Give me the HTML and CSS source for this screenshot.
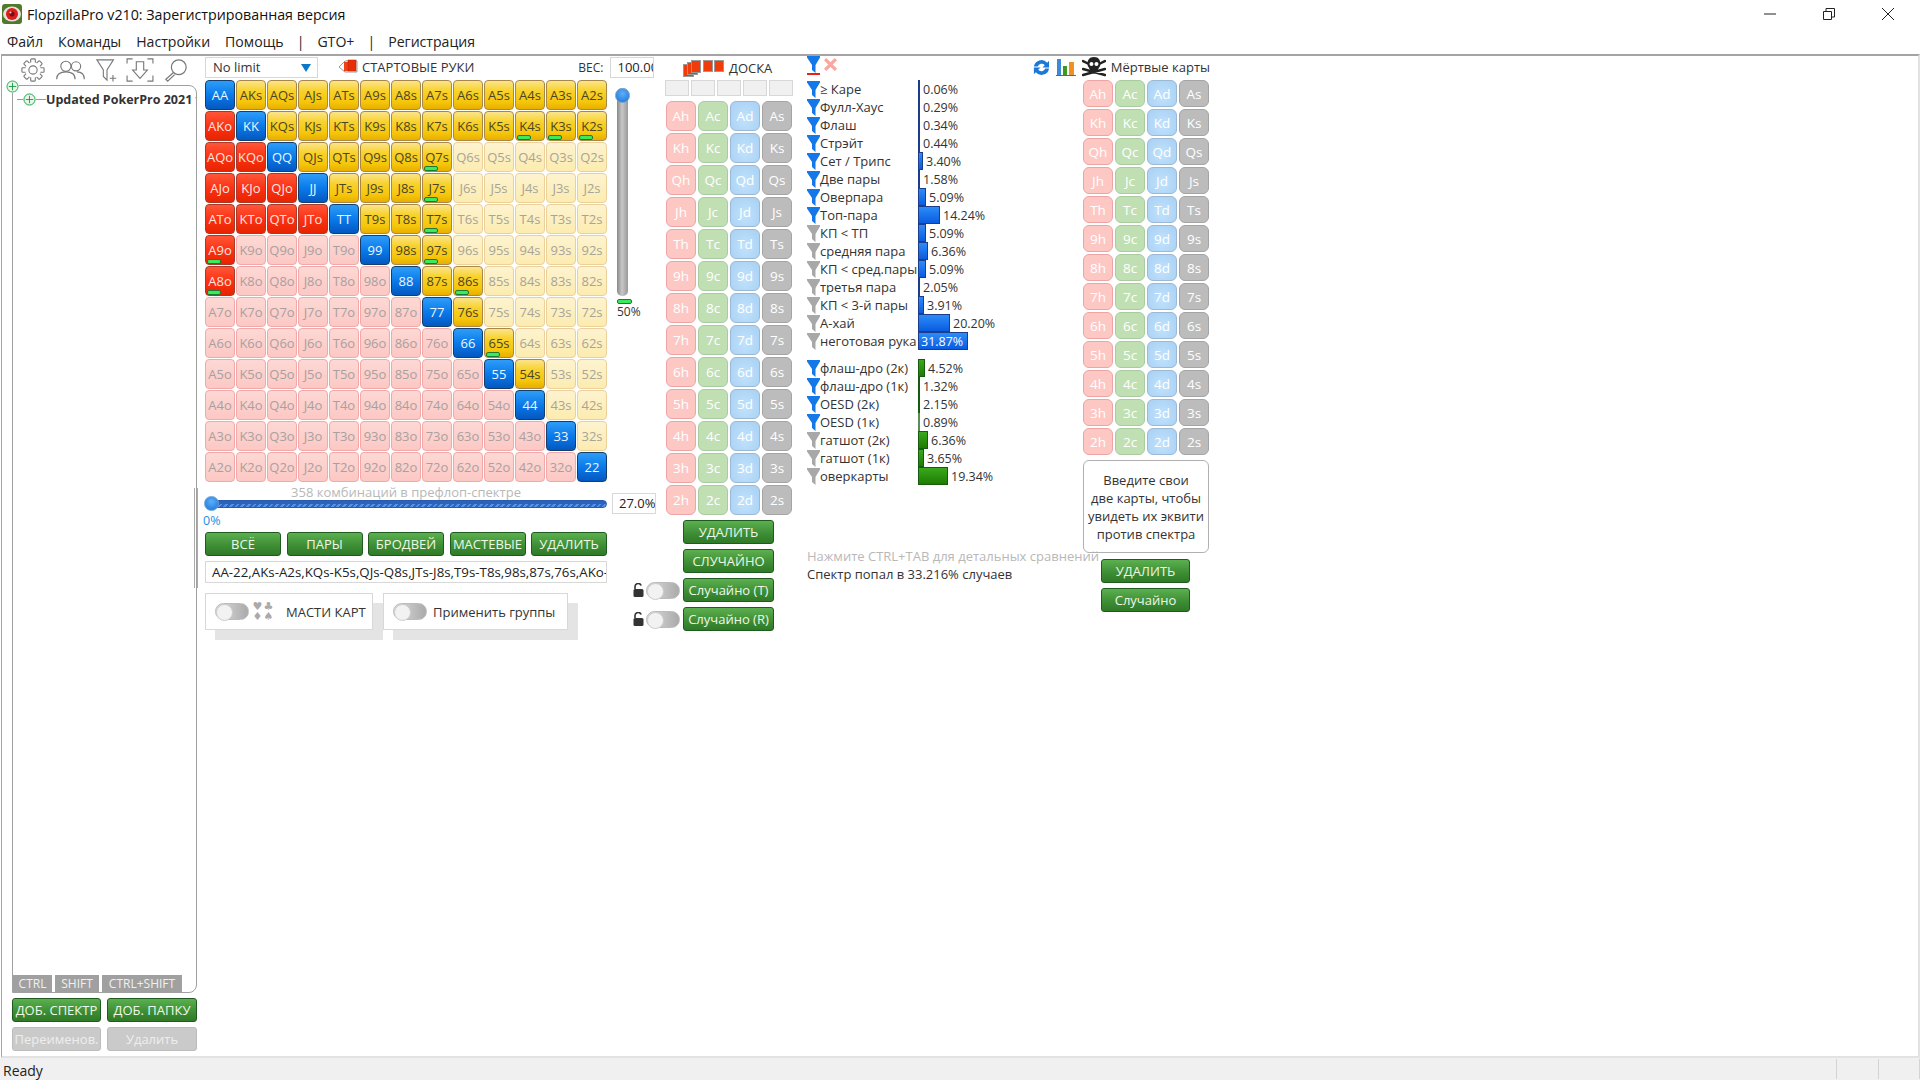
FILE: index.html
```html
<!DOCTYPE html>
<html lang="ru">
<head>
<meta charset="utf-8">
<title>FlopzillaPro v210</title>
<link rel="stylesheet" href="styles.css">
</head>
<body>
<svg class="defs" width="0" height="0">
  <symbol id="funnel" viewBox="0 0 13 17"><path d="M0 0H13V1.500L8.500 9V17L5 14V9L0 1.500Z"/></symbol>
  <symbol id="lock" viewBox="0 0 12 14"><path d="M2 6V3.500A3.200 3.200 0 0 1 8.200 2.600" fill="none" stroke="#333" stroke-width="1.600"/><rect x="0.500" y="6" width="10" height="8" rx="1.500" fill="#333"/></symbol>
</svg>

<header class="titlebar">
  <svg class="logo" viewBox="0 0 20 20"><rect width="20" height="20" rx="3" fill="#4f7a2c"/><ellipse cx="10" cy="10" rx="9" ry="7.500" fill="#e8e0d8"/><circle cx="10" cy="10" r="6" fill="#d81e1e"/><circle cx="10" cy="10" r="2.500" fill="#7a0c0c"/><circle cx="8.500" cy="8.500" r="1" fill="#ffd0d0"/></svg>
  <span class="title">FlopzillaPro v210: Зарегистрированная версия</span>
  <div class="winbtns">
    <svg class="winbtn" viewBox="0 0 12 12"><path d="M0 6H12" stroke="#222"/></svg>
    <svg class="winbtn" viewBox="0 0 12 12"><path d="M.5 3.500H8.500V11.500H.5ZM3 3.500V.5H11.500V9H8.500" fill="none" stroke="#222"/></svg>
    <svg class="winbtn" viewBox="0 0 12 12"><path d="M0 0L12 12M12 0L0 12" stroke="#222"/></svg>
  </div>
</header>

<nav class="menubar">
  <span>Файл</span><span>Команды</span><span>Настройки</span><span>Помощь</span><span class="pipe">|</span><span>GTO+</span><span class="pipe">|</span><span>Регистрация</span>
</nav>

<main class="main">
  <aside class="left">
    <div class="tools">
      <svg class="tool t-gear" viewBox="0 0 26 26" fill="none" stroke="#777" stroke-width="1.200">
        <g fill="#fff"><rect x="10.500" y="1" width="5" height="24" rx="1"/><rect x="10.500" y="1" width="5" height="24" rx="1" transform="rotate(45 13 13)"/><rect x="10.500" y="1" width="5" height="24" rx="1" transform="rotate(90 13 13)"/><rect x="10.500" y="1" width="5" height="24" rx="1" transform="rotate(135 13 13)"/></g>
        <circle cx="13" cy="13" r="8.500" fill="#fff" stroke="none"/><circle cx="13" cy="13" r="4.500"/>
      </svg>
      <svg class="tool t-users" viewBox="0 0 32 26" fill="none" stroke="#777" stroke-width="1.200"><circle cx="11" cy="9" r="5.500"/><path d="M1 23C1 17 5 15 11 15S21 17 21 23"/><circle cx="22" cy="9" r="5"/><path d="M23 15C28 15 31 18 31 23"/></svg>
      <svg class="tool t-filter" viewBox="0 0 24 26" fill="none" stroke="#777" stroke-width="1.200"><path d="M1 2H19L12 13V24L8 20V13Z"/><path d="M15 22H22M18.500 18.500V25.500"/></svg>
      <svg class="tool t-down" viewBox="0 0 30 26" fill="none" stroke="#777" stroke-width="1.200"><path d="M1 6V1H7M23 1H29V6M1 19V25H7M23 25H29V19"/><path d="M11 4H19V13H23L15 22L7 13H11Z"/></svg>
      <svg class="tool t-find" viewBox="0 0 26 26" fill="none" stroke="#777" stroke-width="1.300"><circle cx="16" cy="10" r="8"/><path d="M10 16L2 23L4 25L11.500 18"/></svg>
    </div>
    <div class="tree">
      <svg class="rootplus" viewBox="0 0 14 14"><circle cx="7" cy="7" r="6" fill="#e6f5e6" stroke="#18a048"/><path d="M3 7H11M7 3V11" stroke="#18a048"/></svg>
      <div class="treerow">
        <span class="dash"></span>
        <svg class="plus" viewBox="0 0 14 14"><circle cx="7" cy="7" r="6" fill="#e6f5e6" stroke="#18a048"/><path d="M3 7H11M7 3V11" stroke="#18a048"/></svg>
        <span class="dash long"></span>
        <span class="treelabel">Updated PokerPro 2021 v</span>
      </div>
      <div class="tabs"><span class="tab t1">CTRL</span><span class="tab t2">SHIFT</span><span class="tab t3">CTRL+SHIFT</span></div>
    </div>
    <div class="leftbtns"><button class="btn b89">ДОБ. СПЕКТР</button><button class="btn b90">ДОБ. ПАПКУ</button></div>
    <div class="leftbtns"><button class="btn off b89">Переименов.</button><button class="btn off b90">Удалить</button></div>
  </aside>

  <span class="splitter"></span>

  <section class="center">
    <div class="chead">
      <div class="select">No limit<span class="arrow"></span></div>
      <svg class="hands" viewBox="0 0 20 16"><path d="M1 8L7 2H19V13H7Z" fill="#fff" stroke="#999"/><rect x="6" y="3" width="5" height="9" fill="#f04018"/><rect x="10" y="1" width="8" height="11" fill="#e82c08" stroke="#b02000" stroke-width=".5"/></svg>
      <span class="handstitle">СТАРТОВЫЕ РУКИ</span>
      <span class="weight">ВЕС:</span>
      <div class="input w44 clip">100.00</div>
    </div>
    <div class="gridrow">
      <div class="matrix">
        <div class="c p">AA</div><div class="c s">AKs</div><div class="c s">AQs</div><div class="c s">AJs</div><div class="c s">ATs</div><div class="c s">A9s</div><div class="c s">A8s</div><div class="c s">A7s</div><div class="c s">A6s</div><div class="c s">A5s</div><div class="c s">A4s</div><div class="c s">A3s</div><div class="c s">A2s</div>
        <div class="c o">AKo</div><div class="c p">KK</div><div class="c s">KQs</div><div class="c s">KJs</div><div class="c s">KTs</div><div class="c s">K9s</div><div class="c s">K8s</div><div class="c s">K7s</div><div class="c s">K6s</div><div class="c s">K5s</div><div class="c s">K4s<i class="mk"></i></div><div class="c s">K3s<i class="mk"></i></div><div class="c s">K2s<i class="mk"></i></div>
        <div class="c o">AQo</div><div class="c o">KQo</div><div class="c p">QQ</div><div class="c s">QJs</div><div class="c s">QTs</div><div class="c s">Q9s</div><div class="c s">Q8s</div><div class="c s">Q7s<i class="mk"></i></div><div class="c s f">Q6s</div><div class="c s f">Q5s</div><div class="c s f">Q4s</div><div class="c s f">Q3s</div><div class="c s f">Q2s</div>
        <div class="c o">AJo</div><div class="c o">KJo</div><div class="c o">QJo</div><div class="c p">JJ</div><div class="c s">JTs</div><div class="c s">J9s</div><div class="c s">J8s</div><div class="c s">J7s<i class="mk"></i></div><div class="c s f">J6s</div><div class="c s f">J5s</div><div class="c s f">J4s</div><div class="c s f">J3s</div><div class="c s f">J2s</div>
        <div class="c o">ATo</div><div class="c o">KTo</div><div class="c o">QTo</div><div class="c o">JTo</div><div class="c p">TT</div><div class="c s">T9s</div><div class="c s">T8s</div><div class="c s">T7s<i class="mk"></i></div><div class="c s f">T6s</div><div class="c s f">T5s</div><div class="c s f">T4s</div><div class="c s f">T3s</div><div class="c s f">T2s</div>
        <div class="c o">A9o<i class="mk"></i></div><div class="c o f">K9o</div><div class="c o f">Q9o</div><div class="c o f">J9o</div><div class="c o f">T9o</div><div class="c p">99</div><div class="c s">98s</div><div class="c s">97s<i class="mk"></i></div><div class="c s f">96s</div><div class="c s f">95s</div><div class="c s f">94s</div><div class="c s f">93s</div><div class="c s f">92s</div>
        <div class="c o">A8o<i class="mk"></i></div><div class="c o f">K8o</div><div class="c o f">Q8o</div><div class="c o f">J8o</div><div class="c o f">T8o</div><div class="c o f">98o</div><div class="c p">88</div><div class="c s">87s</div><div class="c s">86s<i class="mk"></i></div><div class="c s f">85s</div><div class="c s f">84s</div><div class="c s f">83s</div><div class="c s f">82s</div>
        <div class="c o f">A7o</div><div class="c o f">K7o</div><div class="c o f">Q7o</div><div class="c o f">J7o</div><div class="c o f">T7o</div><div class="c o f">97o</div><div class="c o f">87o</div><div class="c p">77</div><div class="c s">76s</div><div class="c s f">75s</div><div class="c s f">74s</div><div class="c s f">73s</div><div class="c s f">72s</div>
        <div class="c o f">A6o</div><div class="c o f">K6o</div><div class="c o f">Q6o</div><div class="c o f">J6o</div><div class="c o f">T6o</div><div class="c o f">96o</div><div class="c o f">86o</div><div class="c o f">76o</div><div class="c p">66</div><div class="c s">65s<i class="mk"></i></div><div class="c s f">64s</div><div class="c s f">63s</div><div class="c s f">62s</div>
        <div class="c o f">A5o</div><div class="c o f">K5o</div><div class="c o f">Q5o</div><div class="c o f">J5o</div><div class="c o f">T5o</div><div class="c o f">95o</div><div class="c o f">85o</div><div class="c o f">75o</div><div class="c o f">65o</div><div class="c p">55</div><div class="c s">54s</div><div class="c s f">53s</div><div class="c s f">52s</div>
        <div class="c o f">A4o</div><div class="c o f">K4o</div><div class="c o f">Q4o</div><div class="c o f">J4o</div><div class="c o f">T4o</div><div class="c o f">94o</div><div class="c o f">84o</div><div class="c o f">74o</div><div class="c o f">64o</div><div class="c o f">54o</div><div class="c p">44</div><div class="c s f">43s</div><div class="c s f">42s</div>
        <div class="c o f">A3o</div><div class="c o f">K3o</div><div class="c o f">Q3o</div><div class="c o f">J3o</div><div class="c o f">T3o</div><div class="c o f">93o</div><div class="c o f">83o</div><div class="c o f">73o</div><div class="c o f">63o</div><div class="c o f">53o</div><div class="c o f">43o</div><div class="c p">33</div><div class="c s f">32s</div>
        <div class="c o f">A2o</div><div class="c o f">K2o</div><div class="c o f">Q2o</div><div class="c o f">J2o</div><div class="c o f">T2o</div><div class="c o f">92o</div><div class="c o f">82o</div><div class="c o f">72o</div><div class="c o f">62o</div><div class="c o f">52o</div><div class="c o f">42o</div><div class="c o f">32o</div><div class="c p">22</div>
      </div>
      <div class="vslider">
        <div class="vtrack"><span class="knob"></span></div>
        <span class="vmark"></span>
        <span class="vpct">50%</span>
      </div>
    </div>
    <div class="rangerow">
      <div class="rangecol">
        <div class="combos">358 комбинаций в префлоп-спектре</div>
        <div class="htrack"><span class="knob hk"></span></div>
      </div>
      <div class="input w44 pct">27.0%</div>
    </div>
    <div class="zero">0%</div>
    <div class="quick">
      <button class="btn">ВСЁ</button><button class="btn">ПАРЫ</button><button class="btn">БРОДВЕЙ</button><button class="btn">МАСТЕВЫЕ</button><button class="btn">УДАЛИТЬ</button>
    </div>
    <div class="rangetext">AA-22,AKs-A2s,KQs-K5s,QJs-Q8s,JTs-J8s,T9s-T8s,98s,87s,76s,AKo-</div>
    <div class="opts">
      <div class="opt o1"><span class="toggle"></span><span class="suits"><b>♥</b><b>♣</b><b>♦</b><b>♠</b></span><span class="optl1">МАСТИ КАРТ</span></div>
      <div class="opt o2"><span class="toggle"></span><span class="optl2">Применить группы</span></div>
    </div>
  </section>

  <section class="board">
    <div class="bhead">
      <svg class="stack" viewBox="0 0 42 18"><rect x="0.500" y="5.500" width="10" height="12" fill="#f03c0a" stroke="#999"/><rect x="4.500" y="3.500" width="10" height="12" fill="#f03c0a" stroke="#999"/><rect x="8.500" y="1.500" width="9" height="12" fill="#f03c0a" stroke="#999"/><rect x="20.500" y="1.500" width="9" height="11" fill="#f03c0a" stroke="#999"/><rect x="31.500" y="1.500" width="9" height="11" fill="#f03c0a" stroke="#999"/></svg>
      <span>ДОСКА</span>
    </div>
    <div class="slots"><span></span><span></span><span></span><span></span><span></span></div>
    <div class="cards bcards">
      <div class="card h">Ah</div><div class="card g">Ac</div><div class="card d">Ad</div><div class="card k">As</div>
      <div class="card h">Kh</div><div class="card g">Kc</div><div class="card d">Kd</div><div class="card k">Ks</div>
      <div class="card h">Qh</div><div class="card g">Qc</div><div class="card d">Qd</div><div class="card k">Qs</div>
      <div class="card h">Jh</div><div class="card g">Jc</div><div class="card d">Jd</div><div class="card k">Js</div>
      <div class="card h">Th</div><div class="card g">Tc</div><div class="card d">Td</div><div class="card k">Ts</div>
      <div class="card h">9h</div><div class="card g">9c</div><div class="card d">9d</div><div class="card k">9s</div>
      <div class="card h">8h</div><div class="card g">8c</div><div class="card d">8d</div><div class="card k">8s</div>
      <div class="card h">7h</div><div class="card g">7c</div><div class="card d">7d</div><div class="card k">7s</div>
      <div class="card h">6h</div><div class="card g">6c</div><div class="card d">6d</div><div class="card k">6s</div>
      <div class="card h">5h</div><div class="card g">5c</div><div class="card d">5d</div><div class="card k">5s</div>
      <div class="card h">4h</div><div class="card g">4c</div><div class="card d">4d</div><div class="card k">4s</div>
      <div class="card h">3h</div><div class="card g">3c</div><div class="card d">3d</div><div class="card k">3s</div>
      <div class="card h">2h</div><div class="card g">2c</div><div class="card d">2d</div><div class="card k">2s</div>
    </div>
    <div class="bbtn"><button class="btn">УДАЛИТЬ</button></div>
    <div class="bbtn"><button class="btn">СЛУЧАЙНО</button></div>
    <div class="bbtn"><svg class="lock"><use href="#lock"/></svg><span class="toggle"></span><button class="btn">Случайно (T)</button></div>
    <div class="bbtn"><svg class="lock"><use href="#lock"/></svg><span class="toggle"></span><button class="btn">Случайно (R)</button></div>
  </section>

  <section class="stats">
    <div class="shead">
      <span class="fil"><svg class="funnel on"><use href="#funnel"/></svg></span>
      <svg class="xicon" viewBox="0 0 12 12"><path d="M1 1L11 11M11 1L1 11" stroke="#f9a8a0" stroke-width="3"/></svg>
    </div>
    <div class="rows">
      <div class="row"><svg class="funnel on"><use href="#funnel"/></svg><span class="lbl">≥ Каре</span><span class="bar blue" style="width:1px"></span><span class="val">0.06%</span></div>
      <div class="row"><svg class="funnel on"><use href="#funnel"/></svg><span class="lbl">Фулл-Хаус</span><span class="bar blue" style="width:1px"></span><span class="val">0.29%</span></div>
      <div class="row"><svg class="funnel on"><use href="#funnel"/></svg><span class="lbl">Флаш</span><span class="bar blue" style="width:1px"></span><span class="val">0.34%</span></div>
      <div class="row"><svg class="funnel on"><use href="#funnel"/></svg><span class="lbl">Стрэйт</span><span class="bar blue" style="width:1px"></span><span class="val">0.44%</span></div>
      <div class="row"><svg class="funnel on"><use href="#funnel"/></svg><span class="lbl">Сет / Трипс</span><span class="bar blue" style="width:5px"></span><span class="val">3.40%</span></div>
      <div class="row"><svg class="funnel on"><use href="#funnel"/></svg><span class="lbl">Две пары</span><span class="bar blue" style="width:1px"></span><span class="val">1.58%</span></div>
      <div class="row"><svg class="funnel on"><use href="#funnel"/></svg><span class="lbl">Оверпара</span><span class="bar blue" style="width:8px"></span><span class="val">5.09%</span></div>
      <div class="row"><svg class="funnel on"><use href="#funnel"/></svg><span class="lbl">Топ-пара</span><span class="bar blue" style="width:22px"></span><span class="val">14.24%</span></div>
      <div class="row"><svg class="funnel"><use href="#funnel"/></svg><span class="lbl">КП &lt; ТП</span><span class="bar blue" style="width:8px"></span><span class="val">5.09%</span></div>
      <div class="row"><svg class="funnel"><use href="#funnel"/></svg><span class="lbl">средняя пара</span><span class="bar blue" style="width:10px"></span><span class="val">6.36%</span></div>
      <div class="row"><svg class="funnel"><use href="#funnel"/></svg><span class="lbl">КП &lt; сред.пары</span><span class="bar blue" style="width:8px"></span><span class="val">5.09%</span></div>
      <div class="row"><svg class="funnel"><use href="#funnel"/></svg><span class="lbl">третья пара</span><span class="bar blue" style="width:2px"></span><span class="val">2.05%</span></div>
      <div class="row"><svg class="funnel"><use href="#funnel"/></svg><span class="lbl">КП &lt; 3-й пары</span><span class="bar blue" style="width:6px"></span><span class="val">3.91%</span></div>
      <div class="row"><svg class="funnel"><use href="#funnel"/></svg><span class="lbl">А-хай</span><span class="bar blue" style="width:32px"></span><span class="val">20.20%</span></div>
      <div class="row"><svg class="funnel"><use href="#funnel"/></svg><span class="lbl">неготовая рука</span><span class="bar blue" style="width:50px"></span><span class="val inbar">31.87%</span></div>
    </div>
    <div class="rows draws">
      <div class="row"><svg class="funnel on"><use href="#funnel"/></svg><span class="lbl">флаш-дро (2к)</span><span class="bar green" style="width:7px"></span><span class="val">4.52%</span></div>
      <div class="row"><svg class="funnel on"><use href="#funnel"/></svg><span class="lbl">флаш-дро (1к)</span><span class="bar green" style="width:1px"></span><span class="val">1.32%</span></div>
      <div class="row"><svg class="funnel on"><use href="#funnel"/></svg><span class="lbl">OESD (2к)</span><span class="bar green" style="width:2px"></span><span class="val">2.15%</span></div>
      <div class="row"><svg class="funnel on"><use href="#funnel"/></svg><span class="lbl">OESD (1к)</span><span class="bar green thin" style="width:1px"></span><span class="val">0.89%</span></div>
      <div class="row"><svg class="funnel"><use href="#funnel"/></svg><span class="lbl">гатшот (2к)</span><span class="bar green" style="width:10px"></span><span class="val">6.36%</span></div>
      <div class="row"><svg class="funnel"><use href="#funnel"/></svg><span class="lbl">гатшот (1к)</span><span class="bar green" style="width:6px"></span><span class="val">3.65%</span></div>
      <div class="row"><svg class="funnel"><use href="#funnel"/></svg><span class="lbl">оверкарты</span><span class="bar green" style="width:30px"></span><span class="val">19.34%</span></div>
    </div>
    <p class="note">Нажмите CTRL+TAB для детальных сравнений</p>
    <p class="hit">Спектр попал в 33.216% случаев</p>
  </section>

  <section class="dead">
    <div class="dhead">
      <svg class="refresh" viewBox="0 0 20 20"><path d="M2 9A8 8 0 0 1 16 5L18 3V10H11L13.500 7.500A4.500 4.500 0 0 0 6 9Z" fill="#1a78d8"/><path d="M18 11A8 8 0 0 1 4 15L2 17V10H9L6.500 12.500A4.500 4.500 0 0 0 14 11Z" fill="#1a78d8"/></svg>
      <svg class="chart" viewBox="0 0 20 18"><rect x="1" y="1" width="4" height="16" fill="#3a8ad8"/><rect x="7" y="8" width="4" height="9" fill="#3a9a20"/><rect x="13" y="4" width="5" height="13" fill="#f09020"/><path d="M0 17.500H20" stroke="#3a6a9a"/></svg>
      <svg class="skull" viewBox="0 0 24 20"><path d="M1 4L7 7M23 4L17 7M1 18L23 12M23 18L1 12" stroke="#222" stroke-width="2.500" stroke-linecap="round"/><path d="M12 0C17 0 18.500 3.500 18.500 7C18.500 10 16 11 15.500 15H8.500C8 11 5.500 10 5.500 7C5.500 3.500 7 0 12 0Z" fill="#222"/><circle cx="9.500" cy="7" r="2" fill="#fff"/><circle cx="14.500" cy="7" r="2" fill="#fff"/></svg>
      <span>Мёртвые карты</span>
    </div>
    <div class="cards dcards">
      <div class="card h">Ah</div><div class="card g">Ac</div><div class="card d">Ad</div><div class="card k">As</div>
      <div class="card h">Kh</div><div class="card g">Kc</div><div class="card d">Kd</div><div class="card k">Ks</div>
      <div class="card h">Qh</div><div class="card g">Qc</div><div class="card d">Qd</div><div class="card k">Qs</div>
      <div class="card h">Jh</div><div class="card g">Jc</div><div class="card d">Jd</div><div class="card k">Js</div>
      <div class="card h">Th</div><div class="card g">Tc</div><div class="card d">Td</div><div class="card k">Ts</div>
      <div class="card h">9h</div><div class="card g">9c</div><div class="card d">9d</div><div class="card k">9s</div>
      <div class="card h">8h</div><div class="card g">8c</div><div class="card d">8d</div><div class="card k">8s</div>
      <div class="card h">7h</div><div class="card g">7c</div><div class="card d">7d</div><div class="card k">7s</div>
      <div class="card h">6h</div><div class="card g">6c</div><div class="card d">6d</div><div class="card k">6s</div>
      <div class="card h">5h</div><div class="card g">5c</div><div class="card d">5d</div><div class="card k">5s</div>
      <div class="card h">4h</div><div class="card g">4c</div><div class="card d">4d</div><div class="card k">4s</div>
      <div class="card h">3h</div><div class="card g">3c</div><div class="card d">3d</div><div class="card k">3s</div>
      <div class="card h">2h</div><div class="card g">2c</div><div class="card d">2d</div><div class="card k">2s</div>
    </div>
    <div class="hint">Введите свои<br>две карты, чтобы<br>увидеть их эквити<br>против спектра</div>
    <div class="dbtn"><button class="btn">УДАЛИТЬ</button></div>
    <div class="dbtn"><button class="btn">Случайно</button></div>
  </section>
</main>

<footer class="status">
  <span class="ready">Ready</span>
  <span class="sep s1"></span><span class="sep s2"></span><span class="sep s3"></span>
</footer>
</body>
</html>
```
FILE: styles.css
```css
* { box-sizing: border-box; }
html, body { margin: 0; padding: 0; }
body {
  width: 1920px; height: 1080px; overflow: hidden;
  display: flex; flex-direction: column;
  background: #fff; color: #222;
  font-family: "Open Sans", "Liberation Sans", sans-serif;
  font-size: 12px;
}
.defs { position: absolute; }
button { font-family: inherit; margin: 0; padding: 0; }

/* title + menu */
.titlebar { height: 27px; display: flex; align-items: center; padding-left: 2px; flex: none; }
.logo { width: 20px; height: 20px; margin-right: 5px; }
.title { font-size: 14.250px; color: #111; padding-top: 2px; }
.winbtns { margin-left: auto; display: flex; gap: 47px; padding-right: 26px; }
.winbtn { width: 12px; height: 12px; }
.menubar { height: 27px; display: flex; align-items: center; gap: 15px; padding: 2px 0 0 7px; font-size: 14.100px; color: #222; flex: none; }
.pipe { margin: 0 -2px; }

/* main */
.main {
  height: 1004px; flex: none; display: flex; align-items: flex-start;
  border-top: 2px solid #a4a4a4; border-bottom: 2px solid #e2e2e2;
  border-right: 2px solid #e2e2e2; border-left: 1px solid #a4a4a4;
  margin-left: 1px; position: relative;
}

/* left */
.left { width: 185px; margin-left: 10px; height: 1000px; display: flex; flex-direction: column; flex: none; }
.tools { height: 29px; display: flex; align-items: flex-start; padding: 2px 0 0 9px; }
.tool { height: 24px; flex: none; }
.t-gear { width: 24px; }
.t-users { width: 31px; margin-left: 10px; }
.t-filter { width: 22px; margin-left: 10px; }
.t-down { width: 28px; margin-left: 8px; }
.t-find { width: 24px; margin-left: 10px; }
.tree {
  width: 185px; height: 908px; border: 1px solid #a0a0a0; border-radius: 0 8px 8px 0;
  position: relative; display: flex; flex-direction: column; flex: none;
}
.rootplus { position: absolute; left: -7px; top: -6px; width: 13px; height: 13px; background: #fff; border-radius: 50%; }
.treerow { display: flex; align-items: center; height: 18px; margin-top: 4px; padding-left: 4px; overflow: hidden; white-space: nowrap; }
.dash { width: 6px; height: 1px; background: #999; flex: none; }
.dash.long { width: 10px; }
.plus { width: 13px; height: 13px; flex: none; }
.treelabel { font-weight: 700; font-size: 12.500px; color: #333; margin-left: 0; }
.tabs { margin-top: auto; display: flex; gap: 3px; height: 17px; }
.tab { background: #a0a0a0; color: #f0f0f0; font-size: 12px; line-height: 17px; text-align: center; }
.t1 { width: 39px; } .t2 { width: 44px; } .t3 { width: 80px; }
.leftbtns { display: flex; gap: 6px; margin-top: 5px; }
.b89 { width: 89px; } .b90 { width: 90px; }

.btn {
  height: 24px; border: 1px solid #1f5a1e; border-radius: 3px; color: #eef8e8; font-size: 13px; line-height: 20px;
  background: linear-gradient(#5cb04e, #3f8f36 55%, #2f7a28);
  white-space: nowrap; overflow: hidden;
}
.btn.off { background: #cacaca; border-color: #bcbcbc; color: #eee; }

.splitter { position: absolute; left: 192px; top: 432px; width: 4px; height: 100px; border-left: 1px solid #aaa; border-right: 1px solid #aaa; }

/* center */
.center { width: 451px; margin-left: 8px; flex: none; }
.chead { height: 24px; display: flex; align-items: center; padding-bottom: 2px; }
.select { width: 113px; height: 21px; border: 1px solid #d8d8d8; padding-left: 7px; font-size: 13px; line-height: 19px; color: #333; position: relative; flex: none; }
.arrow { position: absolute; right: 6px; top: 6px; border: 5px solid transparent; border-top: 8px solid #0a78c8; border-bottom: 0; }
.hands { width: 20px; height: 16px; margin-left: 20px; flex: none; }
.handstitle { margin-left: 4px; font-size: 13px; color: #333; white-space: nowrap; }
.weight { margin-left: 104px; font-size: 12px; color: #333; }
.input { border: 1px solid #d8d8d8; height: 21px; font-size: 13px; line-height: 19px; padding-left: 6px; color: #222; white-space: nowrap; overflow: hidden; flex: none; }
.w44 { width: 44px; }
.chead .input { margin-left: 7px; }
.gridrow { display: flex; align-items: flex-start; }
.matrix { display: grid; grid-template-columns: repeat(13, 30px); grid-auto-rows: 30px; gap: 1px; flex: none; width: 402px; }
.c { position: relative; border: 1px solid; border-radius: 4px; font-size: 13px; line-height: 28px; text-align: center; white-space: nowrap; }
.c.p { background: linear-gradient(#2e9df8, #0a7aea 50%, #0458c0); border-color: #123f6e; color: #eef6ff; }
.c.s { background: linear-gradient(#fbe48c, #f8d22c 35%, #f5c60a 75%, #e8ae00); border-color: #a88848; color: #4c4426; }
.c.o { background: linear-gradient(#ff5638, #fb3214 50%, #e82400); border-color: #a83a2c; color: #fde8e0; }
.c.s.f { background: linear-gradient(#fdf3cf, #fcecb0); border-color: #ecd09c; color: #a8a49a; }
.c.o.f { background: linear-gradient(#fdd8d4, #fcc8c4); border-color: #f0a8a8; color: #a8a0a0; }
.mk { position: absolute; left: 1px; bottom: 0; width: 14px; height: 5px; border: 1px solid #1c7a34; border-radius: 2px; background: #3cea5c; }
.vslider { width: 49px; padding-left: 10px; position: relative; flex: none; }
.vtrack { width: 11px; height: 208px; margin-top: 8px; border-radius: 5px; background: linear-gradient(90deg, #888, #c8c8c8 45%, #999); position: relative; }
.knob { position: absolute; left: -2px; top: 0; width: 15px; height: 15px; border-radius: 50%; background: radial-gradient(circle at 50% 35%, #5cb0f8, #1a70d8); border: 1px solid #6aa0d0; }
.vmark { display: block; width: 15px; height: 5px; margin-top: 3px; border: 1px solid #1c7a34; border-radius: 2px; background: #3cea5c; }
.vpct { display: block; font-size: 12px; color: #333; line-height: 16px; }

.rangerow { display: flex; align-items: flex-start; height: 31px; }
.rangecol { width: 402px; position: relative; }
.combos { text-align: center; font-size: 13px; line-height: 16px; color: #b8b8b8; height: 16px; margin-top: 2px; }
.htrack { height: 8px; margin-left: 3px; border-radius: 4px; background: linear-gradient(#2a62c0 0 50%, transparent 50%), repeating-linear-gradient(135deg, #2a66c4 0 2px, #5a92e0 2px 4px); border: 1px solid #2a5aa8; position: relative; }
.hk { left: -5px; top: -5px; }
.pct { margin: 11px 0 0 5px; }
.zero { font-size: 12.500px; color: #1e90e0; line-height: 16px; height: 16px; margin: 0 0 0 -2px; }
.quick { display: grid; grid-template-columns: repeat(5, 76px); gap: 5.500px; width: 402px; margin-top: 3px; }
.rangetext { width: 402px; height: 22px; border: 1px solid #d8d8d8; margin-top: 5px; padding-left: 6px; font-size: 13.300px; line-height: 20px; color: #222; white-space: nowrap; overflow: hidden; }
.opts { display: flex; gap: 10px; margin-top: 10px; }
.opt { height: 37px; background: #fff; border: 1px solid #d8d8d8; box-shadow: 10px 10px 0 #e4e4e4; display: flex; align-items: center; font-size: 13px; color: #333; }
.o1 { width: 168px; padding-left: 9px; }
.o2 { width: 185px; padding-left: 9px; }
.toggle { width: 34px; height: 17px; border-radius: 9px; background: linear-gradient(90deg, #ddd, #aaa); border: 1px solid #bbb; position: relative; flex: none; }
.toggle::before { content: ""; position: absolute; left: 0; top: 0; width: 15px; height: 15px; border-radius: 50%; background: #f2f2f2; border: 1px solid #ccc; }
.suits { display: grid; grid-template-columns: 11px 11px; grid-auto-rows: 10px; margin-left: 3px; font-family: "DejaVu Sans", sans-serif; color: #aaa; line-height: 10px; }
.suits b { font-size: 11px; font-weight: 400; text-align: center; }
.optl1 { margin-left: 12px; }
.optl2 { margin-left: 6px; }

/* board */
.board { width: 128px; margin-left: 9px; flex: none; }
.bhead { height: 24px; display: flex; align-items: center; padding-left: 18px; font-size: 13px; color: #333; gap: 4px; }
.stack { width: 42px; height: 18px; }
.slots { display: flex; gap: 2px; height: 16px; }
.slots span { width: 24px; height: 16px; background: #f0f0f0; border: 1px solid #d8d8d8; }
.cards { display: grid; grid-template-columns: repeat(4, 30px); gap: 2px; width: 126px; }
.bcards { grid-auto-rows: 30px; margin: 5px 0 0 1px; }
.dcards { grid-auto-rows: 27px; margin-left: 51px; }
.card { border: 1px solid; border-radius: 6px; text-align: center; color: #fff; font-size: 13.500px; display: flex; align-items: center; justify-content: center; }
.card.h { background: #fdc8c4; border-color: #eea4a4; }
.card.g { background: #c0e0b4; border-color: #a8cca0; }
.card.d { background: radial-gradient(ellipse at 50% 60%, #c0e2fc, #a8d0f4); border-color: #9cb8d4; }
.card.k { background: #bcbcbc; border-color: #a4a4a4; }
.bbtn { display: flex; align-items: center; justify-content: flex-end; width: 109px; height: 24px; margin-top: 5px; position: relative; }
.board .bbtn .btn { width: 91px; flex: none; }
.bbtn .toggle { flex: none; margin-right: 3px; }
.bbtn .lock { width: 12px; height: 14px; margin-right: 1px; flex: none; }

/* stats */
.stats { width: 225px; margin-left: 14px; flex: none; }
.shead { height: 24px; display: flex; align-items: flex-start; gap: 4px; }
.fil { border-bottom: 2px solid #e8201c; height: 19px; display: block; width: 13px; }
.funnel { width: 13px; height: 17px; fill: #a8a8a8; flex: none; display: block; }
.funnel.on { fill: #1478e8; }
.xicon { width: 13px; height: 13px; margin-top: 2px; }
.row { height: 18px; display: flex; align-items: center; font-size: 13px; color: #333; white-space: nowrap; }
.lbl { width: 98px; flex: none; font-size: 13px; overflow: visible; }
.bar { height: 18px; border: 1px solid; flex: none; }
.bar.blue { background: linear-gradient(#2c8cf8, #0a5ce0); border-color: #1c3c8c; }
.bar.green { background: linear-gradient(#3aa81c, #1e7c00); border-color: #155c10; }
.bar.thin { opacity: .7; }
.val { margin-left: 3px; font-size: 12.500px; }
.val.inbar { margin-left: -47px; color: #fff; }
.draws { margin-top: 9px; }
.note { margin: 62px 0 0; line-height: 18px; font-size: 13px; color: #b8b8b8; white-space: nowrap; }
.hit { margin: 0; line-height: 18px; font-size: 13px; color: #333; white-space: nowrap; }

/* dead */
.dead { width: 178px; flex: none; }
.dhead { height: 24px; display: flex; align-items: center; font-size: 13px; color: #333; padding-bottom: 2px; }
.refresh { width: 19px; height: 19px; }
.chart { width: 20px; height: 18px; margin-left: 5px; }
.skull { width: 24px; height: 20px; margin-left: 6px; }
.dhead span { margin-left: 5px; white-space: nowrap; }
.hint { width: 126px; height: 93px; margin: 5px 0 0 51px; border: 1px solid #b0b0b0; border-radius: 6px; text-align: center; font-size: 13px; line-height: 18px; padding-top: 10px; color: #333; white-space: nowrap; }
.dbtn { margin: 6px 0 0 69px; height: 24px; }
.dbtn + .dbtn { margin-top: 5px; }
.dbtn .btn { width: 89px; }

/* status */
.status { height: 22px; background: #f0f0f0; display: flex; align-items: center; position: relative; flex: none; }
.ready { font-size: 14px; margin-left: 3px; color: #222; padding-top: 2px; }
.sep { position: absolute; top: 1px; width: 1px; height: 20px; background: #d4d4d4; }
.s1 { left: 1836px; } .s2 { left: 1878px; } .s3 { left: 1919px; }
```
